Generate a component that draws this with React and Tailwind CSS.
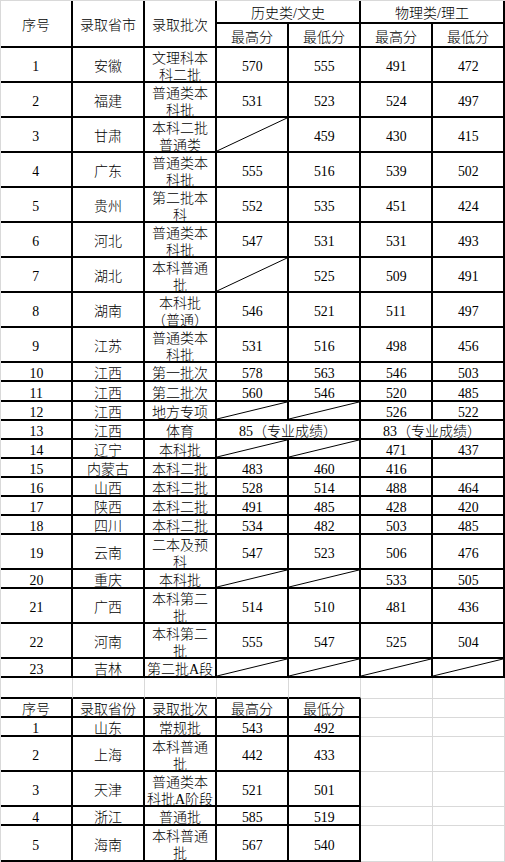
import React from "react";

const D = null; // diagonal cell

const rows1 = [
  ["1", "安徽", ["文理科本", "科二批"], "570", "555", "491", "472"],
  ["2", "福建", ["普通类本", "科批"], "531", "523", "524", "497"],
  ["3", "甘肃", ["本科二批", "普通类"], D, "459", "430", "415"],
  ["4", "广东", ["普通类本", "科批"], "555", "516", "539", "502"],
  ["5", "贵州", ["第二批本", "科"], "552", "535", "451", "424"],
  ["6", "河北", ["普通类本", "科批"], "547", "531", "531", "493"],
  ["7", "湖北", ["本科普通", "批"], D, "525", "509", "491"],
  ["8", "湖南", ["本科批", "（普通）"], "546", "521", "511", "497"],
  ["9", "江苏", ["普通类本", "科批"], "531", "516", "498", "456"],
  ["10", "江西", "第一批次", "578", "563", "546", "503"],
  ["11", "江西", "第二批次", "560", "546", "520", "485"],
  ["12", "江西", "地方专项", D, D, "526", "522"],
  ["13", "江西", "体育", { span: "85（专业成绩）" }, { span: "83（专业成绩）" }],
  ["14", "辽宁", "本科批", D, D, "471", "437"],
  ["15", "内蒙古", "本科二批", "483", "460", "416", ""],
  ["16", "山西", "本科二批", "528", "514", "488", "464"],
  ["17", "陕西", "本科二批", "491", "485", "428", "420"],
  ["18", "四川", "本科二批", "534", "482", "503", "485"],
  ["19", "云南", ["二本及预", "科"], "547", "523", "506", "476"],
  ["20", "重庆", "本科批", D, D, "533", "505"],
  ["21", "广西", ["本科第二", "批"], "514", "510", "481", "436"],
  ["22", "河南", ["本科第二", "批"], "555", "547", "525", "504"],
  ["23", "吉林", "第二批A段", D, D, D, D],
];

const rows2 = [
  ["序号", "录取省份", "录取批次", "最高分", "最低分"],
  ["1", "山东", "常规批", "543", "492"],
  ["2", "上海", ["本科普通", "批"], "442", "433"],
  ["3", "天津", ["普通类本", "科批A阶段"], "521", "501"],
  ["4", "浙江", "普通批", "585", "519"],
  ["5", "海南", ["本科普通", "批"], "567", "540"],
];

const base =
  "flex items-center justify-center text-center overflow-hidden pt-[4px] leading-[17px] whitespace-nowrap";
const black = "border-r-2 border-b-2 border-black";
const gray = "border-r border-b border-[#d9d9d9]";

function Content({ v }) {
  if (Array.isArray(v)) {
    return (
      <div className="flex flex-col items-center">
        {v.map((l, i) => (
          <span key={i}>{l}</span>
        ))}
      </div>
    );
  }
  return <span>{v}</span>;
}

function isNum(v) {
  return typeof v === "string" && /^\d+$/.test(v);
}

function Cell({ v, extra = "" }) {
  if (v === null) {
    return (
      <div className={`${black} ${extra}`}>
        <svg className="block w-full h-full" viewBox="0 0 100 100" preserveAspectRatio="none">
          <line x1="0" y1="100" x2="100" y2="0" stroke="#000" strokeWidth="1" vectorEffect="non-scaling-stroke" />
        </svg>
      </div>
    );
  }
  const size = isNum(v) ? "text-[15px] scale-x-[0.92]" : "text-[14px] font-light";
  return (
    <div className={`${base} ${black} text-[14px] ${extra}`}>
      <div className={size}>
        <Content v={v} />
      </div>
    </div>
  );
}

export default function App() {
  return (
    <div className="w-[505px] h-[862px] bg-white border-l border-t border-[#d9d9d9] text-black font-['Liberation_Serif','Noto_Sans_CJK_SC',serif] overflow-hidden">
      <div className="grid grid-cols-[repeat(7,72px)] grid-rows-[23px_24px_35px_35px_35px_35px_35px_35px_35px_35px_35px_19px_20px_19px_19px_19px_19px_19px_19px_19px_35px_19px_35px_35px_19px]">
        <Cell v="序号" extra="row-span-2" />
        <Cell v="录取省市" extra="row-span-2" />
        <Cell v="录取批次" extra="row-span-2" />
        <Cell v="历史类/文史" extra="col-span-2" />
        <Cell v="物理类/理工" extra="col-span-2" />
        <Cell v="最高分" />
        <Cell v="最低分" />
        <Cell v="最高分" />
        <Cell v="最低分" />
        {rows1.map((r, ri) =>
          r.map((v, ci) =>
            v && typeof v === "object" && !Array.isArray(v) ? (
              <Cell key={`${ri}-${ci}`} v={v.span} extra="col-span-2" />
            ) : (
              <Cell key={`${ri}-${ci}`} v={v} />
            )
          )
        )}
      </div>
      <div className="grid grid-cols-[repeat(7,72px)] grid-rows-[21px_19px_19px_35px_35px_19px_36px]">
        {[0, 1, 2, 3, 4].map((i) => (
          <div key={`g${i}`} className="border-r border-r-[#d9d9d9] border-b-2 border-b-black" />
        ))}
        <div className={gray} />
        <div className={gray} />
        {rows2.map((r, ri) => (
          <React.Fragment key={`r2-${ri}`}>
            {r.map((v, ci) => (
              <Cell key={`${ri}-${ci}`} v={v} />
            ))}
            <div className={gray} />
            <div className={gray} />
          </React.Fragment>
        ))}
      </div>
    </div>
  );
}
